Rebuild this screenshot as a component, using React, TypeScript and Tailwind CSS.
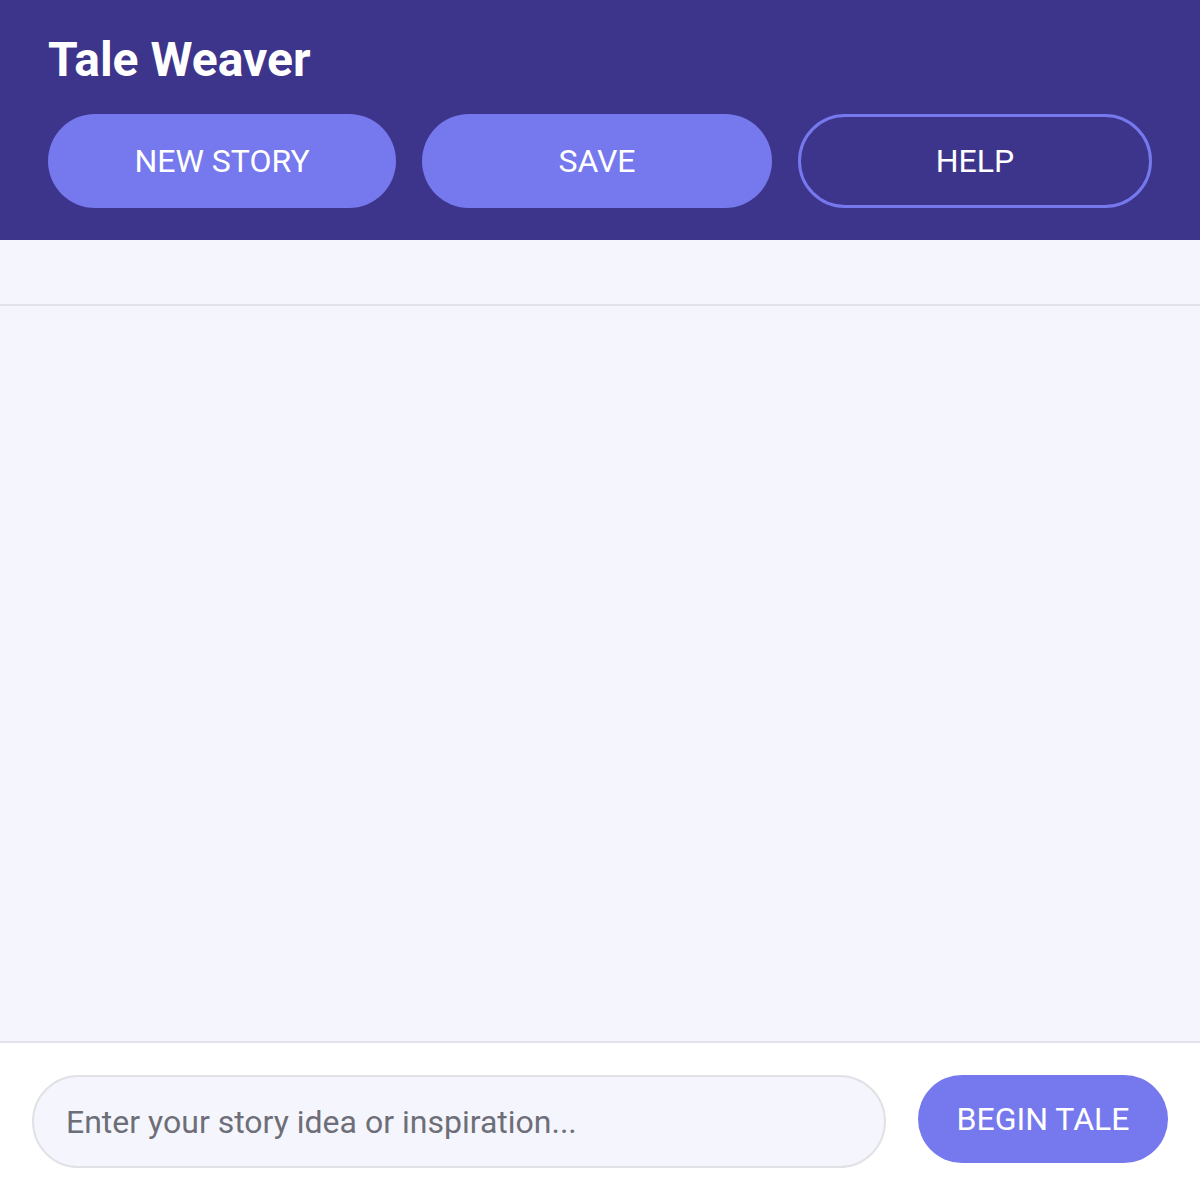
export default function App() {
  return (
    <div
      className="h-[1200px] flex flex-col bg-[#f5f6fd]"
      style={{ fontFamily: "Roboto, 'Liberation Sans', sans-serif" }}
    >
      {/* Header */}
      <header className="bg-[#3d348b] px-12 pt-9 pb-8">
        <h1 className="text-[48px] leading-none font-bold text-white">Tale Weaver</h1>
        <div className="mt-[30px] grid grid-cols-[348px_350px_354px] gap-[26px]">
          <button className="h-[94px] rounded-full bg-[#7678ed] text-white text-[32px] uppercase">
            New Story
          </button>
          <button className="h-[94px] rounded-full bg-[#7678ed] text-white text-[32px] uppercase">
            Save
          </button>
          <button className="h-[94px] rounded-full border-[3px] border-[#7678ed] text-white text-[32px] uppercase">
            Help
          </button>
        </div>
      </header>

      {/* Empty band */}
      <div className="h-[66px] border-b-2 border-[#e2e3ea]" />

      {/* Story area */}
      <main className="flex-1" />

      {/* Input bar */}
      <footer className="bg-white border-t-2 border-[#e2e3ea] p-8 flex gap-8 items-start">
        <input
          type="text"
          placeholder="Enter your story idea or inspiration..."
          className="flex-1 h-[93px] rounded-full border-2 border-[#e2e2e6] bg-[#f5f6fd] px-8 text-[32px] text-gray-800 placeholder:text-[#6e6e78] outline-none"
        />
        <button className="w-[250px] h-[88px] rounded-full bg-[#7678ed] text-white text-[32px] uppercase">
          Begin Tale
        </button>
      </footer>
    </div>
  );
}
